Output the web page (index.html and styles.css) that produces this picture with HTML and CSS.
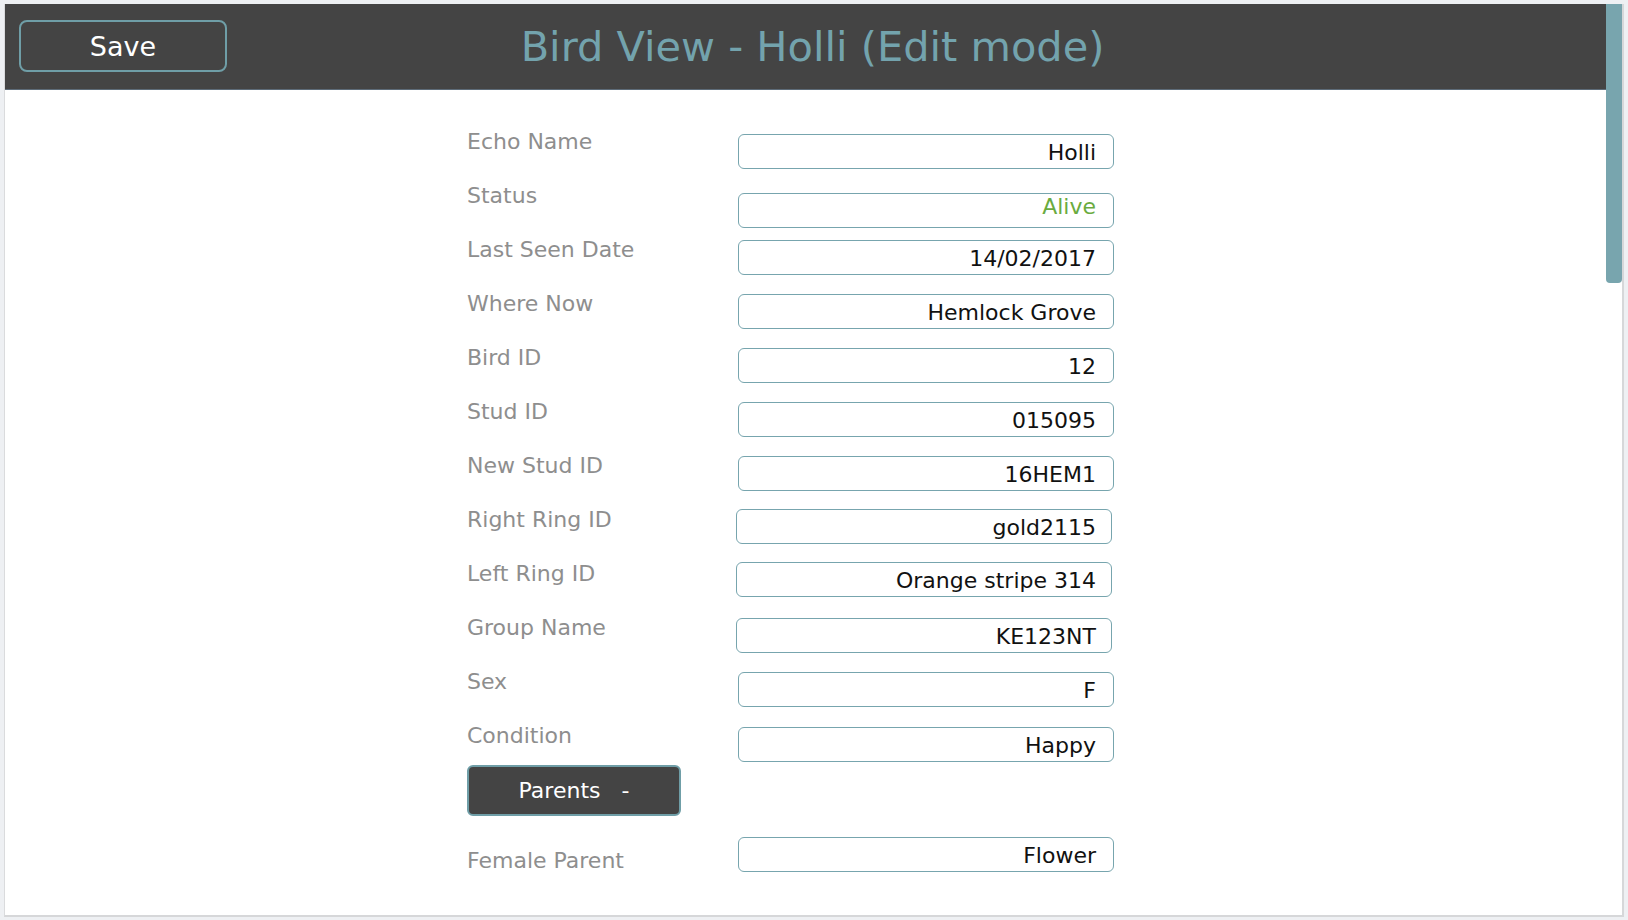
FILE: index.html
```html
<!DOCTYPE html>
<html lang="en">
<head>
<meta charset="utf-8">
<title>Bird View - Holli (Edit mode)</title>
<link rel="stylesheet" href="styles.css">
</head>
<body>
<div class="frame">
  <div class="main">
    <header class="topbar">
      <button class="save-btn">Save</button>
      <h1 class="title">Bird View - Holli (Edit mode)</h1>
      <div class="spacer"></div>
    </header>
    <form class="form">
      <div class="row"><span class="label">Echo Name</span><div class="field f-top5">Holli</div></div>
      <div class="row"><span class="label">Status</span><div class="field f-top10 alive">Alive</div></div>
      <div class="row"><span class="label">Last Seen Date</span><div class="field">14/02/2017</div></div>
      <div class="row"><span class="label">Where Now</span><div class="field">Hemlock Grove</div></div>
      <div class="row"><span class="label">Bird ID</span><div class="field">12</div></div>
      <div class="row"><span class="label">Stud ID</span><div class="field">015095</div></div>
      <div class="row"><span class="label">New Stud ID</span><div class="field">16HEM1</div></div>
      <div class="row"><span class="label">Right Ring ID</span><div class="field shifted f-top2">gold2115</div></div>
      <div class="row"><span class="label">Left Ring ID</span><div class="field shifted f-top1">Orange stripe 314</div></div>
      <div class="row"><span class="label">Group Name</span><div class="field shifted">KE123NT</div></div>
      <div class="row"><span class="label">Sex</span><div class="field">F</div></div>
      <div class="row row-last"><span class="label">Condition</span><div class="field f-top4">Happy</div></div>
      <button type="button" class="parents-btn">Parents   -</button>
      <div class="row row-parent"><span class="label label-low">Female Parent</span><div class="field f-top0">Flower</div></div>
    </form>
  </div>
  <div class="scroll-track"><div class="scroll-thumb"></div></div>
</div>
</body>
</html>
```
FILE: styles.css
```css
html, body {
  margin: 0;
  height: 100%;
}
body {
  background: #eef0f3;
  padding: 4px 4px 3px 4px;
  box-sizing: border-box;
  font-family: "DejaVu Sans", Verdana, sans-serif;
}
.frame {
  display: flex;
  height: 913px;
  box-sizing: border-box;
  background: #ffffff;
  border-left: 1px solid #dadbdd;
  border-right: 2px solid #d6d7d9;
  border-bottom: 2px solid #d6d7d9;
  overflow: hidden;
}
.main {
  flex: 1;
  min-width: 0;
}
.topbar {
  height: 86px;
  box-sizing: border-box;
  background: #444444;
  border-bottom: 1px solid #5d6b78;
  display: grid;
  grid-template-columns: 1fr auto 1fr;
  align-items: start;
  padding-left: 15px;
  margin-left: -1px;
}
.save-btn {
  margin-top: 16px;
  width: 208px;
  height: 52px;
  justify-self: start;
  background: #444444;
  border: 2px solid #6f9ea7;
  border-radius: 8px;
  color: #ffffff;
  font-family: "DejaVu Sans", Verdana, sans-serif;
  font-size: 27px;
  padding: 0;
}
.title {
  margin: 0;
  line-height: 85px;
  font-size: 41.5px;
  font-weight: normal;
  color: #73a3ad;
  white-space: nowrap;
}
.form {
  padding: 39px 0 0 462px;
  display: flex;
  flex-direction: column;
  align-items: flex-start;
}
.row {
  display: flex;
  align-items: flex-start;
  height: 54px;
}
.row-last {
  height: 42px;
}
.label {
  width: 271px;
  font-size: 22px;
  line-height: 26px;
  color: #8e8e8e;
}
.field {
  width: 376px;
  height: 35px;
  margin-top: 3px;
  box-sizing: border-box;
  border: 1.5px solid #77a5ae;
  border-radius: 6px;
  text-align: right;
  padding: 1px 17px 0 0;
  font-size: 22px;
  line-height: 33px;
  color: #111111;
}
.shifted {
  margin-left: -2px;
  padding-right: 15px;
}
.f-top0 { margin-top: 1px; }
.f-top1 { margin-top: 1px; }
.f-top2 { margin-top: 2px; }
.f-top4 { margin-top: 4px; }
.f-top5 { margin-top: 5px; }
.f-top10 { margin-top: 10px; }
.alive {
  color: #6aab3f;
  line-height: 24px;
}
.parents-btn {
  width: 214px;
  height: 51px;
  background: #444444;
  border: 2px solid #6f9ea7;
  border-radius: 6px;
  color: #ffffff;
  font-family: "DejaVu Sans", Verdana, sans-serif;
  font-size: 22px;
  white-space: pre;
  padding: 0;
  margin-bottom: 20px;
}
.row-parent {
  height: auto;
}
.label-low {
  padding-top: 12px;
}
.scroll-track {
  width: 16px;
  flex: none;
}
.scroll-thumb {
  height: 279px;
  background: #78a5ae;
  border-radius: 0 0 4px 4px;
}
```
